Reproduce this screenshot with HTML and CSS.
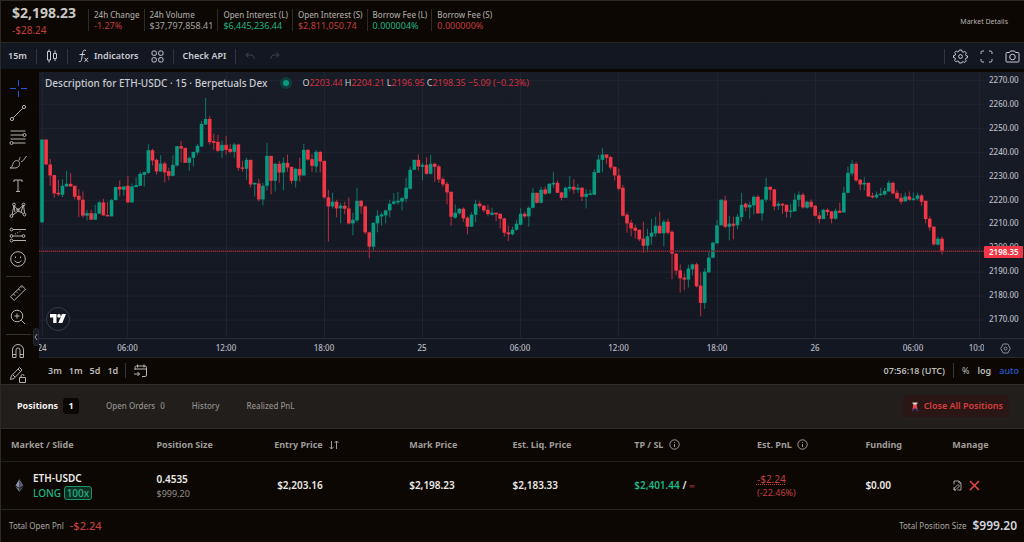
FILE: index.html
```html
<!DOCTYPE html>
<html lang="en">
<head>
<meta charset="utf-8">
<meta name="viewport" content="width=device-width, initial-scale=1">
<title>ETH-USDC · Berpetuals Dex</title>
<link rel="stylesheet" href="styles.css">
</head>
<body>
<main class="app">
  <header class="market">
    <div class="price"><strong class="price-now">$2,198.23</strong><span class="price-delta down">-$28.24</span></div>
    <dl class="stats">
      <div class="stat"><dt>24h Change</dt><dd class="down">-1.27%</dd></div>
      <div class="stat"><dt>24h Volume</dt><dd>$37,797,858.41</dd></div>
      <div class="stat"><dt>Open Interest (L)</dt><dd class="up">$6,445,236.44</dd></div>
      <div class="stat"><dt>Open Interest (S)</dt><dd class="down">$2,811,050.74</dd></div>
      <div class="stat"><dt>Borrow Fee (L)</dt><dd class="up">0.000004%</dd></div>
      <div class="stat"><dt>Borrow Fee (S)</dt><dd class="down">0.000000%</dd></div>
    </dl>
    <button class="details" type="button">Market Details</button>
  </header>

  <div class="topbar">
    <button class="tool" type="button">15m</button>
    <span class="rule"></span>
    <button class="tool" type="button" aria-label="Chart type"><svg width="12" height="14" viewBox="0 0 12 14"><path d="M3 0.500v2M3 11v2.500M1.500 2.500h3v8.500h-3zM9 1.500v3M9 9.500v2.500M7.500 4.500h3v5h-3z"/></svg></button>
    <span class="rule"></span>
    <button class="tool indicators" type="button"><svg width="11" height="14" viewBox="0 0 11 14"><path d="M8 1.500C6 .5 5 1.500 4.700 3.500L3.500 10.500C3.200 12.500 2.200 13 .8 12.400M1.500 5.500h5.500M6.500 8.800l3.500 4M10 8.800l-3.500 4"/></svg>Indicators</button>
    <button class="tool" type="button" aria-label="Layouts"><svg width="13" height="13" viewBox="0 0 13 13"><rect x="1" y="1" width="4.300" height="4.300" rx="1.300"/><rect x="7.700" y="1" width="4.300" height="4.300" rx="1.300"/><rect x="1" y="7.700" width="4.300" height="4.300" rx="1.300"/><rect x="7.700" y="7.700" width="4.300" height="4.300" rx="1.300"/></svg></button>
    <span class="rule"></span>
    <button class="tool" type="button">Check API</button>
    <span class="rule"></span>
    <button class="tool history" type="button" aria-label="Undo" disabled><svg width="10" height="8" viewBox="0 0 10 8"><path d="M3.500.5L.8 3l2.700 2.500M1 3h4.500C8 3 9 4.500 9.200 7"/></svg></button>
    <button class="tool history" type="button" aria-label="Redo" disabled><svg width="10" height="8" viewBox="0 0 10 8"><path d="M6.500.5L9.200 3 6.500 5.500M9 3H4.500C2 3 1 4.500.8 7"/></svg></button>
    <div class="topbar-end">
      <span class="rule"></span>
      <button class="tool" type="button" aria-label="Settings"><svg width="15" height="15" viewBox="0 0 15 15"><path d="M6.300 1h2.400l.4 1.700 1.200.5 1.500-.9 1.600 1.700-.9 1.400.5 1.200 1.500.4v1.700l-1.600.5-.5 1.200.9 1.500-1.600 1.600-1.500-.9-1.200.5L8.700 14H6.300l-.4-1.500-1.200-.5-1.500.9-1.600-1.600.9-1.500L2 8.900.5 8.500V6.700l1.600-.4.5-1.200-.9-1.400 1.600-1.700 1.400.9 1.200-.5z"/><circle cx="7.500" cy="7.500" r="1.900"/></svg></button>
      <button class="tool" type="button" aria-label="Fullscreen"><svg width="13" height="13" viewBox="0 0 13 13"><path d="M1 4V2.500A1.500 1.500 0 0 1 2.500 1H4M9 1h1.500A1.500 1.500 0 0 1 12 2.500V4M12 9v1.500a1.500 1.500 0 0 1-1.500 1.500H9M4 12H2.500A1.500 1.500 0 0 1 1 10.500V9"/></svg></button>
      <button class="tool" type="button" aria-label="Snapshot"><svg width="15" height="13" viewBox="0 0 15 13"><path d="M2 2.500h2.500L5.500 1h4l1 1.500H13a1 1 0 0 1 1 1V11a1 1 0 0 1-1 1H2a1 1 0 0 1-1-1V3.500a1 1 0 0 1 1-1z"/><circle cx="7.500" cy="7" r="2.800"/></svg></button>
    </div>
  </div>

  <section class="workspace">
    <div class="drawbar-wrap">
    <nav class="drawbar" aria-label="Drawing tools">
      <button class="draw active" type="button" aria-label="Cross"><svg viewBox="0 0 18 18"><path d="M9.500 1v6M9.500 12v6M1 9.500h6M12 9.500h6"/></svg></button>
      <button class="draw" type="button" aria-label="Trend line"><svg viewBox="0 0 18 18"><path d="M4.300 13.700l9.400-9.400"/><circle cx="3" cy="15" r="1.600"/><circle cx="15" cy="3" r="1.600"/></svg></button>
      <button class="draw" type="button" aria-label="Fib retracement"><svg viewBox="0 0 18 18"><path d="M1.500 3h15M1.500 7h13M1.500 11h15M4 15h12.500"/><circle cx="15.500" cy="7" r="1.500"/><circle cx="2.500" cy="15" r="1.500"/></svg></button>
      <button class="draw" type="button" aria-label="Brush"><svg viewBox="0 0 18 18"><path d="M1 15c2 0 2-2.500 3.500-5.500C6 7 9.500 7 10.500 9.500S9 15 6 15zM10 7.500c.5-3 1.500-3.500 1.500-3.500M12 8.500c2 .5 3-2.500 5.500-5.500"/></svg></button>
      <button class="draw" type="button" aria-label="Text"><svg viewBox="0 0 18 18"><path d="M5 5V3h8v2M9 3v11.500M7 14.500h4"/></svg></button>
      <button class="draw" type="button" aria-label="Patterns"><svg viewBox="0 0 18 18"><path d="M3 14L5 4.500l4 4.500 5.500-5L15.500 12M4 14l5-4 5.500 2.500M5 5l1 6M14 5l-2 6"/><circle cx="2.500" cy="15" r="1.400"/><circle cx="5" cy="3.500" r="1.400"/><circle cx="9" cy="9" r="1.200"/><circle cx="14.500" cy="3.500" r="1.400"/><circle cx="15.500" cy="13.500" r="1.400"/></svg></button>
      <button class="draw" type="button" aria-label="Projection"><svg viewBox="0 0 18 18"><path d="M4 3.500h13M4 10h9M4 14.500h13"/><path d="M6 8l6-3" stroke-dasharray="1 1.500"/><circle cx="2.500" cy="3.500" r="1.400"/><circle cx="2.500" cy="10" r="1.400"/><circle cx="14.500" cy="10" r="1.400"/><circle cx="2.500" cy="14.500" r="1.400"/></svg></button>
      <button class="draw" type="button" aria-label="Icons"><svg viewBox="0 0 18 18"><circle cx="9" cy="9" r="7.300"/><path d="M5.800 10.500c1 2.700 5.400 2.700 6.400 0M6.500 6.500v1.600M11.500 6.500v1.600"/></svg></button>
      <span class="draw-rule"></span>
      <button class="draw" type="button" aria-label="Measure"><svg viewBox="0 0 18 18"><path d="M1.500 12.800L12.800 1.500l3.700 3.700L5.200 16.500zM4.500 10l1.700 1.700M7 7.500l1.200 1.200M9.500 5l1.700 1.700M12 2.500l1 1.200"/></svg></button>
      <button class="draw" type="button" aria-label="Zoom in"><svg viewBox="0 0 18 18"><circle cx="8" cy="8" r="5.800"/><path d="M12.300 12.300l3.700 3.700M8 5.500v5M5.500 8h5"/></svg></button>
      <span class="draw-rule"></span>
      <button class="draw" type="button" aria-label="Magnet"><svg viewBox="0 0 18 18"><path d="M3.500 15.500V8a5.500 5.500 0 0 1 11 0v7.500h-3.500V8a2 2 0 0 0-4 0v7.500zM3.500 12.500H7M11 12.500h3.500"/></svg></button>
      <button class="draw" type="button" aria-label="Lock drawings"><svg viewBox="0 0 18 18"><path d="M1.500 13.500l.8-3.500L10.500 1.500l2.500 2.500L5 12.500zM9 3l2.500 2.500M4 9l2 2M10.500 11.500h6v5h-6zM12 11.500V10a1.500 1.500 0 0 1 3 0"/></svg></button>
    </nav>
    <button class="collapse" type="button" aria-label="Hide toolbar"><svg width="4" height="8" viewBox="0 0 4 8"><path d="M3 1L1 4l2 3"/></svg></button>
    </div>

    <div class="chart-col">
      <div class="chart">
        <div class="plot">
          <svg class="plot-svg" viewBox="39 72 945 266" preserveAspectRatio="none" aria-label="ETH-USDC candles">
            <g id="grid-lines"></g><g id="candles"></g>
            <path class="last-base" d="M39 251.500H984"/><path class="last-line" d="M39 251.500H984"/>
          </svg>
          <div class="legend">
            <span class="legend-name">Description for ETH-USDC · 15 · Berpetuals Dex</span><i class="live"></i>
            <span class="ohlc">O<b>2203.44</b></span><span class="ohlc">H<b>2204.21</b></span><span class="ohlc">L<b>2196.95</b></span><span class="ohlc">C<b>2198.35</b></span><span class="ohlc"><b>−5.09 (−0.23%)</b></span>
          </div>
          <a class="tv" href="#" aria-label="TradingView"><svg width="16" height="9" viewBox="0 0 16 9"><path d="M0 0h6.500v9H3.200V3.500H0zM12 0h4l-3.700 9H8.300z"/><circle cx="9" cy="1.900" r="1.800"/></svg></a>
        </div>
        <div class="price-axis" id="prices"></div>
        <div class="time-axis" id="times"></div>
        <button class="axis-gear" type="button" aria-label="Axis settings"><svg width="11" height="11" viewBox="0 0 11 11"><path d="M3.200 1h4.600L10.300 5.500 7.800 10H3.200L.7 5.500z"/><circle cx="5.500" cy="5.500" r="1.500"/></svg></button>
      </div>
      <div class="rangebar">
        <button type="button">3m</button><button type="button">1m</button><button type="button">5d</button><button type="button">1d</button>
        <span class="rule"></span>
        <button type="button" aria-label="Go to date"><svg width="15" height="14" viewBox="0 0 15 14"><path d="M2 6V3.500A1.500 1.500 0 0 1 3.500 2h8.500a1.500 1.500 0 0 1 1.500 1.500V11a1.500 1.500 0 0 1-1.500 1.500H9M2 5h11.500M4.500.5v3M11 .5v3M1 10h5.500M4.500 8l2 2-2 2"/></svg></button>
        <div class="rangebar-end"><span>07:56:18 (UTC)</span><span class="rule"></span><button type="button" class="thin">%</button><button type="button">log</button><button type="button" class="auto">auto</button></div>
      </div>
    </div>
  </section>

  <section class="positions">
    <div class="tabs">
      <button class="tab current" type="button">Positions <span class="badge">1</span></button>
      <button class="tab" type="button">Open Orders <span>0</span></button>
      <button class="tab" type="button">History</button>
      <button class="tab" type="button">Realized PnL</button>
      <button class="close-all" type="button"><svg width="8" height="11" viewBox="0 0 8 11"><path fill="#3d3358" d="M.5 10l1.500-4h4l1.700 4-1.700.5-2-2.500-2 2.500z"/><path fill="#ef4444" d="M2 3.500h3.800L6.200 8h-1L4 6.500 2.800 8h-1z"/><path d="M1.500 1.500h5v1.200h-1v1h-3v-1h-1z" fill="#e8dada"/></svg>Close All Positions</button>
    </div>
    <table class="grid">
      <colgroup><col class="c-market"><col class="c-size"><col class="c-entry"><col class="c-mark"><col class="c-liq"><col class="c-tp"><col class="c-pnl"><col class="c-fund"><col class="c-manage"></colgroup>
      <thead><tr>
        <th>Market / Slide</th><th>Position Size</th>
        <th>Entry Price <svg class="ico sort" width="10" height="10" viewBox="0 0 10 10"><path d="M2.500 1v8M.5 7l2 2 2-2M7.500 9V1M5.500 3l2-2 2 2"/></svg></th>
        <th>Mark Price</th><th>Est. Liq. Price</th>
        <th>TP / SL <svg class="ico" width="11" height="11" viewBox="0 0 11 11"><circle cx="5.500" cy="5.500" r="4.700"/><path d="M5.500 5v3M5.500 3v1"/></svg></th>
        <th>Est. PnL <svg class="ico" width="11" height="11" viewBox="0 0 11 11"><circle cx="5.500" cy="5.500" r="4.700"/><path d="M5.500 5v3M5.500 3v1"/></svg></th>
        <th>Funding</th><th>Manage</th>
      </tr></thead>
      <tbody><tr>
        <td><div class="market-cell"><svg width="9" height="13" viewBox="0 0 9 13"><path fill="#8990a8" d="M4.500 0L.5 6.600l4 2.300z"/><path fill="#555b73" d="M4.500 0l4 6.600-4 2.300z"/><path fill="#7b8299" d="M.5 7.600l4 2.200V13z"/><path fill="#464b61" d="M8.500 7.600l-4 2.200V13z"/></svg><div><div>ETH-USDC</div><div class="side">LONG <span class="lev">100x</span></div></div></div></td>
        <td><div>0.4535</div><div class="sub">$999.20</div></td>
        <td class="entry">$2,203.16</td><td>$2,198.23</td><td>$2,183.33</td>
        <td><span class="up">$2,401.44</span> / <span class="inf">∞</span></td>
        <td class="pnl"><div class="pnl-value">-$2.24</div><div class="pnl-pct">(-22.46%)</div></td>
        <td>$0.00</td>
        <td><div class="manage"><button type="button" aria-label="Edit position"><svg width="9" height="11" viewBox="0 0 9 11"><path d="M1 4.500V1h5l2 2v7H4.500M6 1v2h2M1 10l.5-2L5 4.500 6.500 6 3 9.500zM1 7v3h2"/></svg></button><button class="kill" type="button" aria-label="Close position"><svg width="11" height="11" viewBox="0 0 11 11"><path d="M1 1l9 9M10 1L1 10"/></svg></button></div></td>
      </tr></tbody>
    </table>
    <footer class="totals"><span class="total-label">Total Open Pnl</span><strong class="down">-$2.24</strong><span class="total-label push">Total Position Size</span><strong>$999.20</strong></footer>
  </section>
</main>
<script src="chart.js"></script>
</body>
</html>
```
FILE: styles.css
```css
* { box-sizing: border-box; }
body { margin: 0; background: #0c0703; color: #d1d4dc; font-family: "Noto Sans", "Open Sans", sans-serif; font-size: 10px; line-height: 14px; }
button { margin: 0; padding: 0; border: 0; background: none; color: inherit; font: inherit; white-space: nowrap; }
svg { display: block; fill: none; stroke: currentColor; }
.up { color: #1fb584; }
.down { color: #c33e3d; }
.app { display: flex; flex-direction: column; min-height: 100vh; border-top: 1px solid #2d2a26; border-left: 1px solid #2d2a26; }

.market { display: flex; align-items: flex-start; height: 42px; padding: 4px 16px 0 11px; border-bottom: 1px solid #2a2825; }
.price { display: flex; flex-direction: column; width: 76px; }
.price-now { font-size: 14px; line-height: 16px; color: #c9c7c5; font-weight: 700; }
.price-delta { font-size: 10px; line-height: 14px; margin-top: 2px; }
.stats { display: flex; margin: 4px 0 0; line-height: 11px; color: #a5a2a0; }
.stat { padding: 0 4px 0 5px; border-left: 1px solid #2d2a27; height: 22px; white-space: nowrap; }
.stat dt { font-size: 8px; font-weight: 500; }
.stat dd { margin: 0; font-size: 9px; }
.details { margin: 10px 0 0 auto; font-size: 7px; line-height: 14px; color: #b4b1af; }

.topbar { display: flex; align-items: center; gap: 9px; height: 26px; padding: 0 4px 0 7px; background: #131722; font-size: 9px; font-weight: 600; color: #c8cbd2; }
.rule { width: 1px; height: 15px; background: #34363d; flex: none; }
.tool { display: flex; align-items: center; gap: 5px; }
.indicators { padding: 0 3px 0 1px; }
.history { color: #41454f; }
.history + .history { margin-left: 6px; }
.topbar-end { display: flex; align-items: center; gap: 8px; margin-left: auto; }
.topbar-end .tool + .tool { margin-left: 4px; }

.workspace { display: flex; flex: 1; min-height: 314px; padding-top: 3px; }
.drawbar-wrap { position: relative; flex: none; width: 38px; overflow: hidden; }
.drawbar { display: flex; flex-direction: column; height: calc(100% + 4px); padding: 4px 5px 0; color: #b5b3b0; }
.draw { flex: 1; display: flex; align-items: center; justify-content: center; padding-right: 4px; min-height: 0; }
.draw svg { width: 18px; height: 18px; }
.draw.active { color: #2556d8; }
.draw-rule { height: 1px; margin: 4px 3px 4px 0; background: #35322f; }
.collapse { position: absolute; right: 0; bottom: 38px; width: 6px; height: 18px; border: 1px solid #292c35; border-radius: 3px; background: #171a23; color: #989ba3; }

.chart-col { flex: 1; display: flex; flex-direction: column; min-width: 0; }
.chart { flex: 1; display: grid; grid-template: 1fr 18px / 1fr 40px; background: linear-gradient(#181c27, #131722); border-bottom: 1px solid #25282f; min-height: 0; }
.plot { position: relative; min-height: 0; border-bottom: 1px solid #292d37; }
.plot-svg { position: absolute; inset: 0; width: 100%; height: 100%; stroke: none; }
.grid-line { fill: none; stroke: #20242f; stroke-width: 1; }
.rise { fill: #089981; }
.fall { fill: #f23645; }
.rise.wick, .fall.wick { opacity: 0.75; }
.last-base { stroke: #55212c; stroke-width: 1; }
.last-line { stroke: #b53442; stroke-width: 1; stroke-dasharray: 1 1; }
.legend { position: absolute; top: 4px; left: 6px; display: flex; align-items: center; gap: 2px; font-size: 9px; line-height: 14px; white-space: nowrap; color: #c8cbd2; }
.legend-name { font-size: 10px; font-weight: 500; }
.live { width: 6px; height: 6px; margin: 0 11px 0 14px; border-radius: 50%; background: #089981; box-shadow: 0 0 0 3px #103d3b; }
.ohlc b { font-weight: 400; color: #d2303f; }
.tv { position: absolute; left: 7px; bottom: 7px; display: flex; align-items: center; justify-content: center; width: 24px; height: 24px; border: 1px solid #393d47; border-radius: 50%; background: #131722; }
.tv svg { fill: #fff; stroke: none; }
.price-axis { position: relative; border-bottom: 1px solid #292d37; font-size: 8px; font-weight: 500; }
.price-tick { position: absolute; left: 5px; line-height: 12px; margin-top: -6px; color: #b9bcc4; }
.price-last { position: absolute; left: 0; right: 1px; padding-left: 5px; margin-top: -6px; height: 12px; line-height: 12px; background: #f23645; color: #fff; font-weight: 600; border-radius: 1px; }
.time-axis { position: relative; overflow: hidden; font-size: 8px; font-weight: 500; color: #b9bcc4; }
.time-tick { position: absolute; top: 2px; line-height: 14px; transform: translateX(-50%); white-space: nowrap; }
.axis-gear { display: flex; align-items: center; padding: 2px 0 0 16px; color: #8f929a; }
.rangebar { display: flex; align-items: center; gap: 7px; height: 26px; padding: 0 5px 0 9px; font-size: 9px; font-weight: 600; color: #bbb9b7; }
.rangebar-end { display: flex; align-items: center; gap: 8px; margin-left: auto; }
.thin { font-weight: 400; }
.rangebar .auto { color: #2859ce; font-weight: 500; }

.positions { flex: none; border-top: 1px solid #302d2a; }
.tabs { display: flex; align-items: center; height: 44px; padding: 0 15px 0 16px; gap: 27px; background: #211e1b; border-bottom: 1px solid #2e2b28; font-size: 8px; font-weight: 500; color: #928f8c; }
.tab { display: flex; align-items: center; gap: 5px; }
.current { font-size: 9px; font-weight: 700; color: #f3f2f1; }
.badge { width: 16px; height: 16px; line-height: 16px; border-radius: 3px; background: #0c0703; text-align: center; }
.close-all { display: flex; align-items: center; gap: 5px; margin-left: auto; height: 22px; padding: 0 6px 0 8px; border-radius: 4px; background: #291615; color: #d83f3e; font-size: 9px; font-weight: 600; }
.close-all svg { stroke: none; }
.grid { width: 100%; table-layout: fixed; border-collapse: collapse; font-size: 10px; line-height: 15px; }
.c-market { width: 15.200%; } .c-size { width: 11.500%; } .c-entry { width: 13.200%; } .c-mark { width: 10.100%; } .c-liq { width: 11.900%; } .c-tp { width: 12%; } .c-pnl { width: 10.600%; } .c-fund { width: 8.500%; } .c-manage { width: 7%; }
.grid th { height: 33px; padding: 0; text-align: left; font-size: 9px; font-weight: 700; color: #9f9b99; border-bottom: 1px solid #211e1b; white-space: nowrap; }
.grid td { height: 48px; padding: 0; font-weight: 600; color: #eceae8; border-bottom: 1px solid #282522; white-space: nowrap; }
.grid th:first-child { padding-left: 10px; }
.grid .entry { padding-left: 3px; }
.ico { display: inline-block; vertical-align: -2px; margin-left: 3px; }
.ico.sort { margin-left: 4px; }
.market-cell { display: flex; align-items: center; gap: 9px; padding-left: 14px; }
.market-cell svg { stroke: none; }
.side { color: #1fb584; font-weight: 500; }
.lev { display: inline-block; padding: 0 2px; line-height: 12px; border: 1px solid #1b946d; border-radius: 3px; background: #102d22; }
.sub { font-size: 9px; font-weight: 400; color: #93908d; line-height: 13px; }
.inf { color: #c33e3d; font-size: 8px; font-weight: 400; }
.grid .pnl { color: #c33e3d; font-weight: 400; }
.pnl-value { line-height: 13px; text-decoration: underline dotted; }
.pnl-pct { font-size: 9px; line-height: 13px; }
.manage { display: flex; align-items: center; gap: 7px; padding-left: 1px; color: #a29e9b; }
.manage .kill { color: #ef4444; }
.kill svg { stroke-width: 1.5; }
.totals { display: flex; align-items: center; gap: 6px; height: 32px; padding: 0 7px 0 8px; }
.totals strong { font-size: 12px; font-weight: 600; }
.totals .down { font-size: 11px; font-weight: 500; }
.total-label { font-size: 8px; color: #aaa7a4; }
.push { margin-left: auto; }
```
FILE: chart.js
```js
// Each candle: direction, high, body top, body bottom, low (thirds of a chart unit below `top`).
const runs = [
  { top: 70, rows: `u 209 209 458 458,d 209 209 284 284,d 267 284 317 348,d 316 316 371 384,d 330 369 374 378,u 328 348 375 382,u 303 342 350 350,d 310 342 350 350,d 348 348 381 389,d 359 378 390 442,d 365 390 438 444,u 420 430 438 452,d 420 430 450 450,u 405 431 450 450,u 394 398 432 432,d 387 398 437 437,d 396 436 440 440,u 388 391 440 440,u 350 352 391 391,d 332 351 359 380,u 348 350 360 378,d 318 348 398 398,u 341 350 398 398,u 322 346 352 352,u 306 312 348 348,u 305 307 315 350,u 223 241 309 312,d 237 241 272 287,d 266 270 305 314,u 256 281 305 306,d 275 281 308 338,d 294 304 318 332,u 256 285 318 318,u 228 229 287 290,d 213 229 236 278,d 234 234 279 279` },
  { top: 90, rows: `u 200 204 219 243,u 186 186 204 230,u 162 168 188 195,u 93 102 170 170,u 24 87 104 104,d 78 87 157 164,d 132 154 159 180,d 135 156 183 186,u 152 165 183 204,d 138 165 180 194,d 162 177 186 191,u 159 164 186 204,d 162 164 234 243,d 213 233 237 246,u 204 210 237 270,d 210 210 284 293,u 279 279 284 320,d 267 281 329 335,u 279 288 329 347,u 159 198 288 302,d 198 198 273 314,u 219 222 273 305,d 213 222 248 279,u 203 219 248 302,d 194 219 233 246,d 231 231 273 282,u 234 237 273 293,d 204 237 257 275,u 162 180 257 257,d 178 180 209 212,d 192 208 228 246,u 180 186 230 248,d 184 186 215 248,d 213 213 323 327,d 300 323 350 456,u 309 336 350 356,d 330 336 356 383,u 339 348 356 401,d 336 348 357 374,d 323 356 401 404,u 369 390 401 437,u 294 333 392 398,d 331 333 350 372,d 348 350 428 434,d 426 428 471 506,u 399 399 471 482,u 362 378 401 428,u 368 374 380 408,u 360 362 377 401,u 330 342 362 383` },
  { top: 140, rows: `u 160 185 192 195,u 156 183 188 195,u 172 175 185 212,u 114 144 177 188,u 80 90 147 150,u 60 60 90 90,d 43 60 80 92,u 68 75 81 122,d 52 75 102 105,u 45 72 102 104,d 68 72 81 126,d 75 80 119 129,d 112 118 134 141,d 126 132 158 194,d 156 156 231 258,u 194 219 234 237,u 205 207 221 225,d 203 207 236 246,d 230 234 261 284,u 218 225 261 261,u 180 192 225 248,d 183 192 199 206,d 195 198 212 218,d 195 210 223 230,u 204 219 225 228,d 219 219 224 245,d 222 222 237 266,d 234 236 279 291,d 258 278 284 304,u 261 270 284 287,u 240 252 270 273,u 206 222 255 257,d 216 222 230 236,u 200 204 230 261,u 145 159 204 206,d 159 159 189 191,u 141 150 189 191,d 140 149 162 166,u 130 132 161 161,u 96 129 134 144,d 122 129 159 159,d 156 158 174 182,u 140 144 174 174,u 109 141 147 155,d 118 141 150 162,u 132 144 150 160,d 141 144 171 184,u 148 162 171 206,u 150 161 165 167,u 88 97 165 165,u 45 59 99 99,u 24 44 60 96,d 43 44 54 72,d 48 52 83 89,d 80 81 107 122,d 86 107 147 152,d 136 144 228 230,d 219 225 251 279,d 240 249 266 290,d 255 264 273 297,d 270 270 299 305,d 246 297 318 339,u 267 290 318 338,u 237 279 291 315,u 231 258 281 291,d 216 258 281 281,u 240 246 281 320,d 237 246 279 285,d 272 276 342 419,d 340 342 393 407,d 374 392 416 459,d 401 414 420 452,u 375 387 420 444,u 372 374 389 407,d 369 374 440 443,d 399 438 490 530,u 386 396 490 508,u 336 354 398 400,u 306 309 354 356,u 240 257 311 311,u 178 180 257 257,d 168 182 261 266,u 228 252 261 302,d 231 252 258 299,u 222 231 257 269,u 159 195 232 246,d 188 192 203 215,u 186 195 203 237,u 168 171 197 224,d 166 171 221 221,u 178 180 221 243,u 114 141 180 188,d 140 141 150 182,d 147 149 200 212,u 185 192 198 210,d 190 192 197 222,d 194 195 216 234,u 192 212 216 234` },
  { top: 150, rows: `u 131 150 185 185,u 125 135 150 171,d 129 135 173 176,u 153 156 174 177,d 149 156 171 176,d 166 168 198 200,d 186 197 208 221,u 177 180 208 208,d 176 180 187 198,d 183 185 207 221,u 176 183 207 210,d 159 183 189 189,u 111 129 188 188,u 50 69 129 131,u 31 42 71 78,d 36 42 92 96,d 87 90 104 122,u 82 99 104 122,d 99 99 140 141,d 129 138 143 146,u 125 135 143 147,u 114 132 136 138,u 114 123 134 138,u 92 99 125 125,d 96 99 131 134,d 120 129 146 148,d 131 144 156 164,u 128 140 155 155,d 125 140 150 153,u 128 146 151 153,u 129 137 147 152,d 132 137 156 168,d 153 153 208 221,d 200 207 233 243,d 229 231 284 288,u 261 267 285 288,d 261 267 305 315` }
];
const SVG = 'http://www.w3.org/2000/svg';
const view = { x: 39, y: 72, w: 945, h: 266 };
const add = (parent, name, attrs) => {
  const el = document.createElementNS(SVG, name);
  for (const key in attrs) el.setAttribute(key, attrs[key]);
  parent.appendChild(el);
};
const label = (parent, cls, text, side, value) => {
  const el = document.createElement('span');
  el.className = cls;
  el.textContent = text;
  el.style[side] = value + '%';
  parent.appendChild(el);
};
const grid = document.getElementById('grid-lines');
const candles = document.getElementById('candles');
const prices = document.getElementById('prices');
const times = document.getElementById('times');

for (let i = 0; i <= 10; i++) {
  const y = 80 + i * 23.95;
  add(grid, 'path', { class: 'grid-line', d: `M39 ${Math.round(y) + 0.5}H984` });
  label(prices, 'price-tick', (2270 - i * 10).toFixed(2), 'top', (y - view.y) / view.h * 100);
}
label(prices, 'price-last', '2198.35', 'top', (252 - view.y) / view.h * 100);

[[42, '24'], [127.5, '06:00'], [226, '12:00'], [324, '18:00'], [422, '25'], [520, '06:00'], [618.5, '12:00'], [717, '18:00'], [815, '26'], [913, '06:00'], [979, '10:00']].forEach(([x, text]) => {
  add(grid, 'path', { class: 'grid-line', d: `M${Math.floor(x) + 0.5} 72V338` });
  label(times, 'time-tick', text, 'left', (x - view.x) / view.w * 100);
});

let index = 0;
for (const run of runs) {
  for (const row of run.rows.split(',')) {
    const [dir, ...levels] = row.split(' ');
    const [high, top, bottom, low] = levels.map(v => run.top + v / 3);
    const x = 42 + index * 4.091;
    const tone = dir === 'u' ? 'rise' : 'fall';
    add(candles, 'rect', { class: tone + ' wick', x: x - 0.5, y: high, width: 1, height: low - high });
    add(candles, 'rect', { class: tone, x: x - 1.8, y: top, width: 3.6, height: bottom - top });
    index++;
  }
}
```
